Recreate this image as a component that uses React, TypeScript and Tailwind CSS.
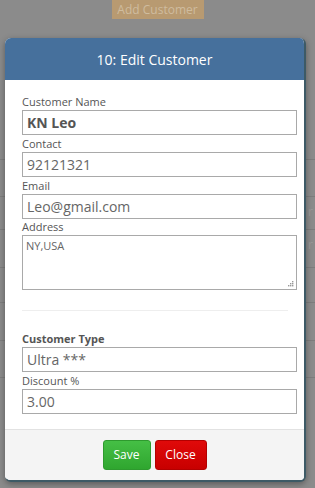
import React from 'react';

const font = { fontFamily: '"Open Sans", "Noto Sans", Arial, sans-serif' };

function Field({ label, value, bold, strongLabel }: { label: string; value: string; bold?: boolean; strongLabel?: boolean }) {
  return (
    <div className="flex flex-col">
      <label className={`h-[17px] text-[11px] leading-[17px] text-[#555] ${strongLabel ? 'font-bold' : ''}`}>{label}</label>
      <div
        className={`h-[25px] border border-[#a9a9a9] px-[4px] text-[14px] leading-[23px] ${bold ? 'font-bold text-[#555]' : 'text-[#666]'}`}
      >
        {value}
      </div>
    </div>
  );
}

export default function App() {
  return (
    <div className="relative h-[488px] w-[315px] overflow-hidden bg-[#8b8b8b]" style={font}>
      {/* page behind the overlay */}
      <div className="flex justify-center">
        <div className="h-[19px] w-[92px] bg-[#b89a71] text-center text-[12px] leading-[19px] text-[#cfbc9f]">
          Add Customer
        </div>
      </div>
      <div className="mt-[140px] flex flex-col">
        {[37, 33, 38, 35, 38, 37, 36].map((h, i) => (
          <div key={i} className="flex border-t border-[#7d7d7d]" style={{ height: h }}>
            <div className="w-[18px] border-r border-[#7d7d7d]" />
            <div className="w-[180px] border-r border-[#7d7d7d]" />
            <div className="flex-1 pr-[2px] text-right text-[12px] leading-[30px] text-[#9a9a9a]">{i === 1 || i === 2 ? 'r' : ''}</div>
          </div>
        ))}
      </div>

      {/* modal */}
      <div className="absolute left-[5px] top-[38px] flex w-[301px] flex-col overflow-hidden rounded-[6px] border-r-2 border-b-2 border-[#3d5a66] bg-white shadow-[0_2px_6px_rgba(0,0,0,0.35)]">
        <div className="flex h-[42px] items-center justify-center bg-[#46709c] text-[14px] text-white">
          10: Edit Customer
        </div>
        <div className="flex flex-col pl-[17px] pr-[7px] pt-[13px]">
          <div className="flex flex-col gap-0">
            <Field label="Customer Name" value="KN Leo" bold />
            <Field label="Contact" value="92121321" />
            <Field label="Email" value="Leo@gmail.com" />
            <div className="flex flex-col">
              <label className="h-[16px] text-[11px] leading-[16px] text-[#555]">Address</label>
              <div className="relative h-[55px] border border-[#a9a9a9] px-[3px] pt-[2px] text-[11px] leading-[16px] text-[#666]">
                NY,USA
                <svg className="absolute bottom-[2px] right-[2px]" width="7" height="7" viewBox="0 0 7 7">
                  <rect x="5" y="1" width="1.4" height="1.4" fill="#999" />
                  <rect x="3" y="3" width="1.4" height="1.4" fill="#999" />
                  <rect x="5" y="3" width="1.4" height="1.4" fill="#999" />
                  <rect x="1" y="5" width="1.4" height="1.4" fill="#999" />
                  <rect x="3" y="5" width="1.4" height="1.4" fill="#999" />
                  <rect x="5" y="5" width="1.4" height="1.4" fill="#999" />
                </svg>
              </div>
            </div>
          </div>
          <div className="mt-[20px] mr-[9px] h-px bg-[#eeeeee]" />
          <div className="mt-[19px] flex flex-col">
            <Field label="Customer Type" value="Ultra ***" strongLabel />
            <Field label="Discount %" value="3.00" />
          </div>
        </div>
        <div className="mt-[15px] flex h-[51px] items-start justify-center gap-[4px] border-t border-[#e2e2e2] bg-[#f4f4f4] pt-[10px]">
          <button className="h-[30px] w-[48px] rounded-[3px] border border-[#2e9a2e] bg-gradient-to-b from-[#45bf45] to-[#2fa62f] text-[12px] text-white">
            Save
          </button>
          <button className="h-[30px] w-[52px] rounded-[3px] border border-[#b30000] bg-gradient-to-b from-[#e00a0a] to-[#c80000] text-[12px] text-white">
            Close
          </button>
        </div>
      </div>
    </div>
  );
}
